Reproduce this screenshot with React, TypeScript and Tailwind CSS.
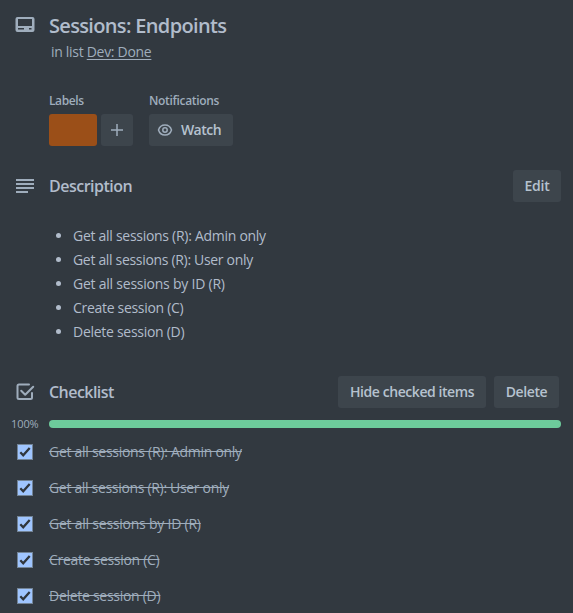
import type { ReactNode } from 'react';

const tasks = [
  { text: 'Get all sessions (R): Admin only', track: 'tracking-[-0.28px]' },
  { text: 'Get all sessions (R): User only', track: 'tracking-[-0.32px]' },
  { text: 'Get all sessions by ID (R)', track: 'tracking-[-0.23px]' },
  { text: 'Create session (C)', track: 'tracking-[-0.3px]' },
  { text: 'Delete session (D)', track: 'tracking-[-0.28px]' },
];

function Button({ className, children }: { className: string; children: ReactNode }) {
  return (
    <button className={`flex h-8 shrink-0 items-center justify-center whitespace-nowrap rounded-[3px] bg-[#3d454c] text-sm font-semibold text-[#b6c2cf] ${className}`}>
      {children}
    </button>
  );
}

function CardIcon() {
  return (
    <svg className="mt-px" width="24" height="24" viewBox="0 0 24 24" fill="#9fadbc">
      <path fillRule="evenodd" d="M4.500 4A2 2 0 0 0 2.500 6v11a2 2 0 0 0 2 2h15a2 2 0 0 0 2-2V6a2 2 0 0 0-2-2h-15Zm.5 2h14v7H5V6Zm0 9h6v1.500H5V15Zm11 0h2.500v1.500H16V15Z" />
    </svg>
  );
}

function ChecklistIcon() {
  return (
    <svg width="24" height="24" viewBox="0 0 24 24" fill="none" stroke="#9fadbc" strokeWidth="2" strokeLinecap="round" strokeLinejoin="round">
      <path d="M16 4.500H6A1.500 1.500 0 0 0 4.500 6v11.500A1.500 1.500 0 0 0 6 19h11.500a1.500 1.500 0 0 0 1.500-1.500V13" />
      <path d="m8.2 10.700 4 4 8-8" />
    </svg>
  );
}

function Checkbox() {
  return (
    <span className="flex h-4 w-4 items-center justify-center border border-[#738496] bg-[#9fc5ff]">
      <svg width="14" height="14" viewBox="0 0 14 14" fill="none" stroke="#30363d" strokeWidth="2.3">
        <path d="M2.3 7.3 5.2 10.3 11.7 3" />
      </svg>
    </span>
  );
}

export default function App() {
  return (
    <main className="h-[613px] w-[573px] overflow-hidden bg-[#323940] font-['Open_Sans','Noto_Sans',sans-serif] text-sm text-[#b1bccb]">
      <header className="flex pl-[13px] pt-3">
        <CardIcon />
        <div className="pl-3">
          <h1 className="mt-0.5 text-xl font-semibold leading-6 tracking-[-0.66px]"><span>Sessions: Endpoints</span></h1>
          <p className="ml-0.5 mt-1 leading-5 tracking-[-0.3px] text-[#9fadbc]"><span>in list <u className="underline-offset-2">Dev: Done</u></span></p>
        </div>
      </header>

      <section className="flex gap-4 pl-[49px] pt-[29px]">
        <div>
          <h2 className="h-5 text-xs font-semibold leading-5 tracking-[-0.4px] text-[#9fadbc]"><span>Labels</span></h2>
          <div className="mt-[3px] flex gap-1">
            <span className="h-8 w-12 rounded-[3px] bg-[#9b4f18]" />
            <Button className="w-8">
              <svg width="16" height="16" viewBox="0 0 16 16" stroke="#9fadbc" strokeWidth="1.5"><path d="M8 2v12M2 8h12" /></svg>
            </Button>
          </div>
        </div>
        <div>
          <h2 className="h-5 text-xs font-semibold leading-5 tracking-[-0.32px] text-[#9fadbc]"><span>Notifications</span></h2>
          <div className="mt-[3px]">
            <Button className="w-[84px] gap-2 pr-1 tracking-[-0.5px]">
              <svg width="16" height="16" viewBox="0 0 16 16" fill="none" stroke="#9fadbc" strokeWidth="1.5">
                <path d="M1.5 8C2.5 4.7 5 3 8 3s5.500 1.700 6.500 5C13.500 11.300 11 13 8 13S2.500 11.300 1.500 8Z" />
                <circle cx="8" cy="8" r="2.200" />
              </svg>
              <span>Watch</span>
            </Button>
          </div>
        </div>
      </section>

      <section className="mt-6">
        <div className="flex h-8 items-center pl-4 pr-3">
          <svg width="18" height="14" viewBox="0 0 18 14" fill="#9fadbc">
            <path d="M0 0h18v2H0zM0 4h18v2H0zM0 8h18v2H0zM0 12h12v2H0z" />
          </svg>
          <h2 className="ml-[15px] flex-1 text-base font-semibold tracking-[-0.5px]"><span>Description</span></h2>
          <Button className="w-12 tracking-[-0.3px]"><span>Edit</span></Button>
        </div>
        <ul className="pl-[56px] pt-[22px]">
          {tasks.map((t) => (
            <li key={t.text} className="flex h-6 items-center">
              <span className="mb-0.5 mr-3 h-[5px] w-[5px] rounded-full bg-[#b1bccb]" />
              <span className={`leading-6 ${t.track}`}>{t.text}</span>
            </li>
          ))}
        </ul>
      </section>

      <section className="mt-8">
        <div className="flex h-8 items-center pl-[13px] pr-[14px]">
          <ChecklistIcon />
          <h2 className="ml-3 flex-1 text-base font-semibold tracking-[-0.54px]"><span>Checklist</span></h2>
          <Button className="w-[148px] tracking-[-0.43px]"><span>Hide checked items</span></Button>
          <Button className="ml-2 w-[65px] tracking-[-0.4px]"><span>Delete</span></Button>
        </div>
        <div className="mt-2 flex h-4 items-center pl-[11px] pr-3">
          <span className="w-[38px] text-[11px] leading-4 tracking-[-0.1px] text-[#9fadbc]"><span>100%</span></span>
          <span className="h-2 flex-1 rounded bg-[#6dcb9b]" />
        </div>
        <ul className="pt-0.5">
          {tasks.map((t) => (
            <li key={t.text} className="flex h-9 items-center gap-4 pl-[17px] text-[#9fadbc]">
              <Checkbox />
              <span className={`line-through ${t.track}`}>{t.text}</span>
            </li>
          ))}
        </ul>
      </section>
    </main>
  );
}
